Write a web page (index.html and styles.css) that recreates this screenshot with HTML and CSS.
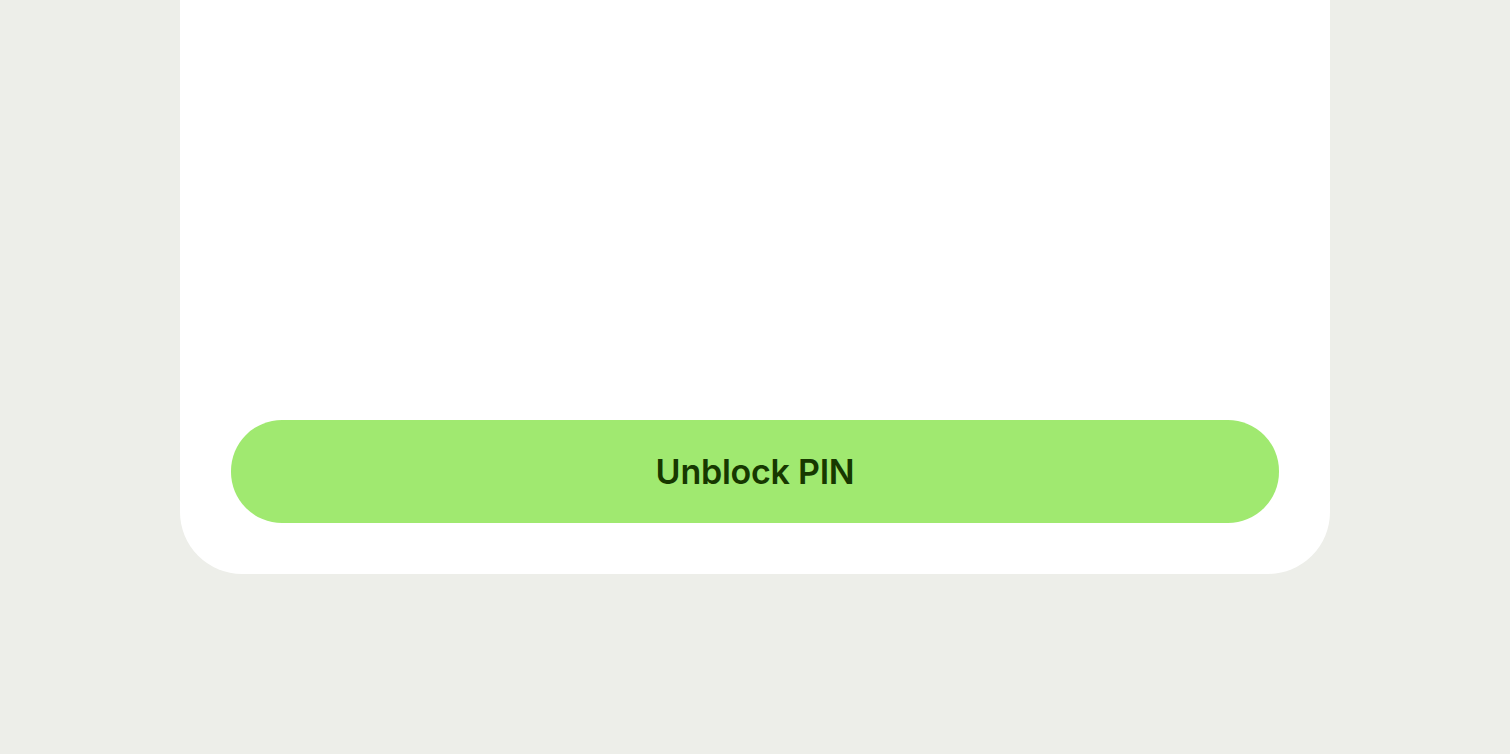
FILE: index.html
```html
<!DOCTYPE html>
<html lang="en">
<head>
<meta charset="utf-8">
<title>Unblock PIN</title>
<link rel="stylesheet" href="styles.css">
</head>
<body>
<div class="page">
  <div class="card">
    <div class="card-body"></div>
    <button class="primary-btn" type="button">Unblock PIN</button>
  </div>
</div>
</body>
</html>
```
FILE: styles.css
```css
html, body {
  margin: 0;
  padding: 0;
  background: #edeee9;
  font-family: Inter, "Noto Sans", sans-serif;
}
.page {
  display: flex;
  justify-content: center;
  height: 754px;
}
.card {
  width: 1150px;
  height: 573.5px;
  box-sizing: border-box;
  background: #ffffff;
  border-radius: 0 0 62px 62px;
  padding: 0 51px 51px;
  display: flex;
  flex-direction: column;
}
.card-body {
  flex: 1;
}
.primary-btn {
  height: 102.5px;
  width: 100%;
  border: none;
  border-radius: 51px;
  background: #a0e970;
  color: #173800;
  font-family: Inter, "Noto Sans", sans-serif;
  font-size: 34px;
  font-weight: 600;
  letter-spacing: -0.25px;
  cursor: pointer;
}
```
